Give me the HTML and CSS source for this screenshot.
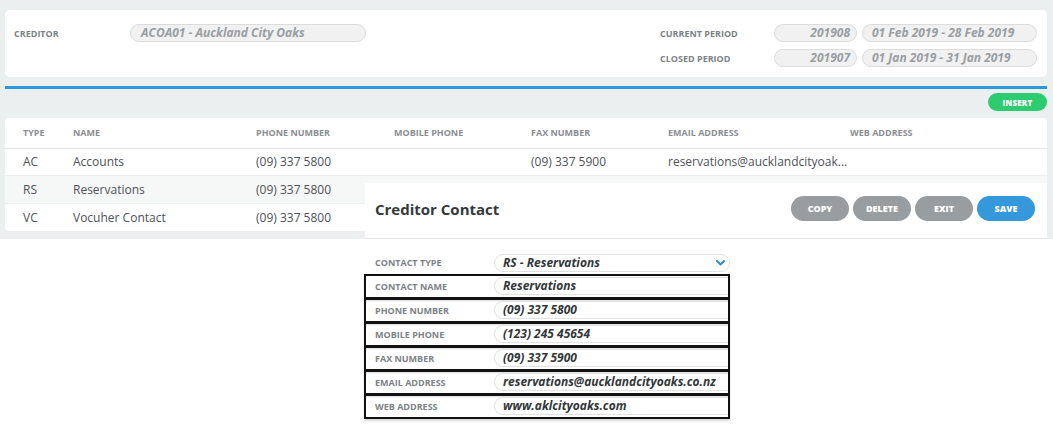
FILE: index.html
```html
<!DOCTYPE html>
<html lang="en">
<head>
    <meta charset="UTF-8">
    <title>Creditor Contacts</title>
    <link rel="stylesheet" href="styles.css">
</head>
<body>
    <div class="page">
        <div class="summary">
            <div class="summary-left">
                <span class="label creditor-label">CREDITOR</span>
                <div class="field creditor-field">ACOA01 - Auckland City Oaks</div>
            </div>
            <div class="summary-right">
                <div class="period-row">
                    <span class="label period-label">CURRENT PERIOD</span>
                    <div class="field period-code">201908</div>
                    <div class="field period-range">01 Feb 2019 - 28 Feb 2019</div>
                </div>
                <div class="period-row">
                    <span class="label period-label">CLOSED PERIOD</span>
                    <div class="field period-code">201907</div>
                    <div class="field period-range">01 Jan 2019 - 31 Jan 2019</div>
                </div>
            </div>
        </div>

        <div class="divider"></div>

        <div class="toolbar">
            <button class="insert-btn">INSERT</button>
        </div>

        <table class="contacts">
            <thead>
                <tr>
                    <th class="c-type">TYPE</th>
                    <th class="c-name">NAME</th>
                    <th class="c-phone">PHONE NUMBER</th>
                    <th class="c-mobile">MOBILE PHONE</th>
                    <th class="c-fax">FAX NUMBER</th>
                    <th class="c-email">EMAIL ADDRESS</th>
                    <th class="c-web">WEB ADDRESS</th>
                </tr>
            </thead>
            <tbody>
                <tr>
                    <td>AC</td>
                    <td>Accounts</td>
                    <td>(09) 337 5800</td>
                    <td></td>
                    <td>(09) 337 5900</td>
                    <td class="email">reservations@aucklandcityoak...</td>
                    <td></td>
                </tr>
                <tr class="selected">
                    <td>RS</td>
                    <td>Reservations</td>
                    <td>(09) 337 5800</td>
                    <td></td>
                    <td></td>
                    <td></td>
                    <td></td>
                </tr>
                <tr>
                    <td>VC</td>
                    <td>Vocuher Contact</td>
                    <td>(09) 337 5800</td>
                    <td></td>
                    <td></td>
                    <td></td>
                    <td></td>
                </tr>
            </tbody>
        </table>
    </div>

    <div class="modal">
        <div class="modal-header">
            <h2>Creditor Contact</h2>
            <div class="modal-actions">
                <button class="btn btn-grey">COPY</button>
                <button class="btn btn-grey">DELETE</button>
                <button class="btn btn-grey">EXIT</button>
                <button class="btn btn-blue">SAVE</button>
            </div>
        </div>
        <div class="form">
            <div class="form-row">
                <span class="label form-label">CONTACT TYPE</span>
                <div class="input select">RS - Reservations
                    <svg class="chevron" width="9" height="6" viewBox="0 0 9 6"><path d="M1 1 L4.5 4.5 L8 1" fill="none" stroke="#2d8fd5" stroke-width="2" stroke-linecap="round" stroke-linejoin="round"/></svg>
                </div>
            </div>
            <div class="form-row marked">
                <span class="label form-label">CONTACT NAME</span>
                <div class="input">Reservations</div>
            </div>
            <div class="form-row marked">
                <span class="label form-label">PHONE NUMBER</span>
                <div class="input">(09) 337 5800</div>
            </div>
            <div class="form-row marked">
                <span class="label form-label">MOBILE PHONE</span>
                <div class="input">(123) 245 45654</div>
            </div>
            <div class="form-row marked">
                <span class="label form-label">FAX NUMBER</span>
                <div class="input">(09) 337 5900</div>
            </div>
            <div class="form-row marked">
                <span class="label form-label">EMAIL ADDRESS</span>
                <div class="input">reservations@aucklandcityoaks.co.nz</div>
            </div>
            <div class="form-row marked">
                <span class="label form-label">WEB ADDRESS</span>
                <div class="input">www.aklcityoaks.com</div>
            </div>
        </div>
    </div>
</body>
</html>
```

FILE: styles.css
```css
* {
    margin: 0;
    padding: 0;
    box-sizing: border-box;
    font-family: 'Open Sans', 'Liberation Sans', sans-serif;
}

body {
    background: white;
    width: 1053px;
    height: 434px;
    overflow: hidden;
    position: relative;
}

.page {
    background: #eceff0;
    height: 239px;
    padding: 10px 6px 0 5px;
}

.label {
    font-size: 9px;
    font-weight: 700;
    color: #7d8286;
}

.summary {
    background: white;
    border-radius: 5px;
    height: 67px;
    display: flex;
    justify-content: space-between;
    padding: 14px 10px 0 9px;
}

.summary-left {
    display: flex;
    align-items: center;
    height: 18px;
}

.creditor-label {
    width: 116px;
}

.field {
    height: 18px;
    border: 1px solid #dcdcdc;
    border-radius: 9px;
    background: #f1f1f1;
    color: #9a9ea2;
    font-size: 12px;
    font-weight: 700;
    font-style: italic;
    line-height: 16px;
    padding: 0 10px;
}

.creditor-field {
    width: 236px;
}

.summary-right {
    display: flex;
    flex-direction: column;
    gap: 7px;
}

.period-row {
    display: flex;
    align-items: center;
    gap: 5px;
}

.period-label {
    width: 109px;
}

.period-code {
    width: 83px;
    text-align: right;
    padding-right: 6px;
}

.period-range {
    width: 175px;
    padding-left: 9px;
}

.divider {
    height: 3px;
    background: #2d96dd;
    margin-top: 9px;
}

.toolbar {
    display: flex;
    justify-content: flex-end;
    padding-top: 4px;
    height: 29px;
}

.insert-btn {
    width: 59px;
    height: 18px;
    border: none;
    border-radius: 9px;
    background: #2ecc71;
    color: white;
    font-size: 8px;
    font-weight: 800;
    letter-spacing: 0.2px;
}

.contacts {
    width: 1042px;
    background: white;
    border-collapse: collapse;
    border-radius: 4px;
    table-layout: fixed;
}

.contacts th {
    height: 30px;
    text-align: left;
    font-size: 9px;
    font-weight: 700;
    color: #8a8e92;
    border-bottom: 1px solid #e3e5e6;
}

.contacts td {
    height: 27.6px;
    font-size: 12px;
    color: #4e5256;
    border-bottom: 1px solid #eceeef;
    white-space: nowrap;
    overflow: hidden;
}

.contacts tr:last-child td {
    border-bottom: none;
}

.contacts th:first-child,
.contacts td:first-child {
    padding-left: 18px;
}

.contacts .selected td {
    background: #f6f7f7;
}

.c-type { width: 68px; }
.c-name { width: 183px; }
.c-phone { width: 138px; }
.c-mobile { width: 137px; }
.c-fax { width: 137px; }
.c-email { width: 182px; }

.modal {
    position: absolute;
    left: 365px;
    top: 183px;
    width: 682px;
    height: 251px;
    background: white;
}

.modal-header {
    display: flex;
    justify-content: space-between;
    align-items: center;
    height: 56px;
    padding: 0 12px 4px 10px;
    border-bottom: 1px solid #e4e4ec;
}

.modal-header h2 {
    font-size: 15px;
    font-weight: 700;
    color: #35393c;
}

.modal-actions {
    display: flex;
    gap: 4px;
}

.btn {
    height: 25px;
    border: none;
    border-radius: 13px;
    color: white;
    font-size: 9px;
    font-weight: 800;
    padding: 0 10px;
    min-width: 58px;
}

.btn-grey {
    background: #999da0;
}

.btn-blue {
    background: #3498db;
}

.form {
    padding-top: 12px;
    width: 366px;
    margin-left: -1px;
}

.form-row {
    display: flex;
    align-items: center;
    height: 23.5px;
    padding-left: 11px;
}

.form-row.marked {
    border: 2px solid #111;
    padding-left: 9px;
    margin-top: -1px;
    height: 25px;
    box-shadow: 0 2px 2px rgba(0, 0, 0, 0.15);
}

.form-label {
    width: 119px;
    flex: none;
}

.input {
    flex: 1;
    height: 18px;
    border: 1px solid #e2e2e2;
    border-right: none;
    border-radius: 9px 0 0 9px;
    font-size: 12px;
    font-weight: 700;
    font-style: italic;
    color: #33373a;
    line-height: 16px;
    padding-left: 8px;
    white-space: nowrap;
}

.select {
    border-right: 1px solid #e2e2e2;
    border-radius: 9px;
    display: flex;
    align-items: center;
    justify-content: space-between;
    padding-right: 4px;
}

.chevron {
    display: block;
}
```
